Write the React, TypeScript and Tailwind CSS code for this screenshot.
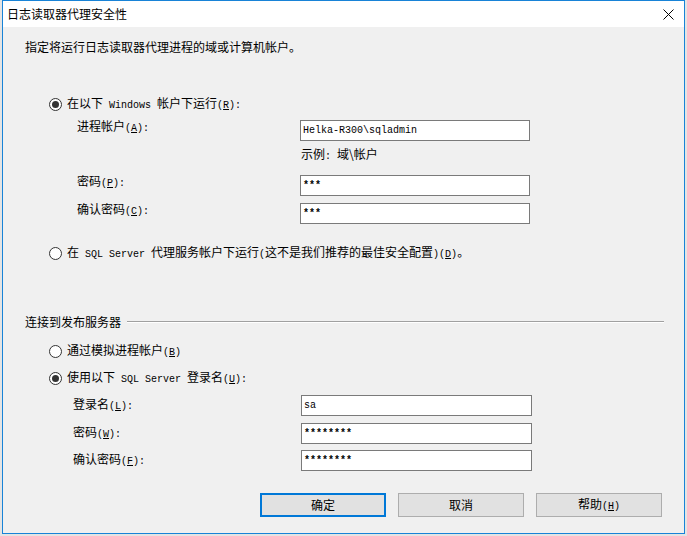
import React from 'react';

// Windows classic dialog: 日志读取器代理安全性

const M: React.FC<{ children: React.ReactNode }> = ({ children }) => (
  <span className="font-['Liberation_Mono',monospace] text-[10px] whitespace-pre">{children}</span>
);

const Radio: React.FC<{ checked?: boolean }> = ({ checked }) => (
  <span className="w-[13px] h-[13px] rounded-full border border-[#333333] bg-white flex items-center justify-center shrink-0">
    {checked && <span className="w-[7px] h-[7px] rounded-full bg-[#333333]" />}
  </span>
);

const Box: React.FC<{ value: string; wide?: boolean; secret?: boolean }> = ({ value, wide, secret }) => (
  <div className={`${wide ? 'w-[231px]' : 'w-[230px]'} h-[21px] border border-[#7a7a7a] bg-white flex items-center pl-[2px] text-black`}>
    {secret ? (
      <span className="font-['Liberation_Mono',monospace] text-[10px] font-bold">{value}</span>
    ) : (
      <M>{value}</M>
    )}
  </div>
);

const Button: React.FC<{ children: React.ReactNode; primary?: boolean }> = ({ children, primary }) => (
  <div
    className={`w-[126px] h-[24px] flex items-center justify-center bg-[#e1e1e1] ${primary ? 'border-2 border-[#0078d7]' : 'border border-[#adadad]'}`}
  >
    {children}
  </div>
);

const App: React.FC = () => {
  return (
    <div className="w-[687px] h-[536px] bg-[#e4e4e4] pl-[2px] overflow-hidden font-['Noto_Sans_CJK_SC','Microsoft_YaHei',sans-serif] text-[12px] leading-[16px] text-black">
      <div className="w-[683px] h-[534px] border border-[#1883d7] bg-[#f0f0f0] flex flex-col">
        {/* title bar */}
        <div className="h-[26px] bg-white flex items-center pl-[4px] pr-[10px] shrink-0">
          <span>日志读取器代理安全性</span>
          <svg className="ml-auto" width="11" height="11" viewBox="0 0 11 11">
            <path d="M0.5 0.5 L10.5 10.5 M10.5 0.5 L0.5 10.5" stroke="#000" strokeWidth="1" />
          </svg>
        </div>

        {/* agent account */}
        <div className="mt-[12px] h-[16px] pl-[22px]">指定将运行日志读取器代理进程的域或计算机帐户。</div>

        <div className="mt-[41px] h-[16px] pl-[46px] flex items-center gap-[5px]">
          <Radio checked />
          <span>
            在以下<M> Windows </M>帐户下运行<M>(<u>R</u>):</M>
          </span>
        </div>

        <div className="mt-[8px] h-[21px] pl-[74px] flex items-center">
          <span className="w-[223px] pb-[6px]">
            进程帐户<M>(<u>A</u>):</M>
          </span>
          <Box value="Helka-R300\sqladmin" />
        </div>

        <div className="mt-[5px] h-[16px] pl-[298px]">
          示例<M>: </M>域\帐户
        </div>

        <div className="mt-[13px] h-[21px] pl-[74px] flex items-center">
          <span className="w-[223px] pb-[6px]">
            密码<M>(<u>P</u>):</M>
          </span>
          <Box value="***" secret />
        </div>

        <div className="mt-[7px] h-[21px] pl-[74px] flex items-center">
          <span className="w-[223px] pb-[6px]">
            确认密码<M>(<u>C</u>):</M>
          </span>
          <Box value="***" secret />
        </div>

        <div className="mt-[21px] h-[16px] pl-[46px] flex items-center gap-[5px]">
          <Radio />
          <span>
            在<M> SQL Server </M>代理服务帐户下运行<M>(</M>这不是我们推荐的最佳安全配置<M>)(<u>D</u>)</M>。
          </span>
        </div>

        {/* publisher connection */}
        <div className="mt-[53px] h-[16px] pl-[22px] pr-[20px] flex items-center gap-[6px]">
          <span className="shrink-0">连接到发布服务器</span>
          <div className="flex-1 border-t border-[#a0a0a0] border-b border-b-white" />
        </div>

        <div className="mt-[13px] h-[16px] pl-[46px] flex items-center gap-[5px]">
          <Radio />
          <span>
            通过模拟进程帐户<M>(<u>B</u>)</M>
          </span>
        </div>

        <div className="mt-[11px] h-[16px] pl-[46px] flex items-center gap-[5px]">
          <Radio checked />
          <span>
            使用以下<M> SQL Server </M>登录名<M>(<u>U</u>):</M>
          </span>
        </div>

        <div className="mt-[9px] h-[21px] pl-[70px] flex items-center">
          <span className="w-[228px]">
            登录名<M>(<u>L</u>):</M>
          </span>
          <Box value="sa" wide />
        </div>

        <div className="mt-[7px] h-[21px] pl-[70px] flex items-center">
          <span className="w-[228px]">
            密码<M>(<u>W</u>):</M>
          </span>
          <Box value="********" wide secret />
        </div>

        <div className="mt-[6px] h-[21px] pl-[70px] flex items-center">
          <span className="w-[228px]">
            确认密码<M>(<u>F</u>):</M>
          </span>
          <Box value="********" wide secret />
        </div>

        {/* buttons */}
        <div className="mt-[22px] pl-[257px] flex gap-[12px]">
          <Button primary>确定</Button>
          <Button>取消</Button>
          <Button>
            <span>
              帮助<M>(<u>H</u>)</M>
            </span>
          </Button>
        </div>
      </div>
    </div>
  );
};

export default App;
